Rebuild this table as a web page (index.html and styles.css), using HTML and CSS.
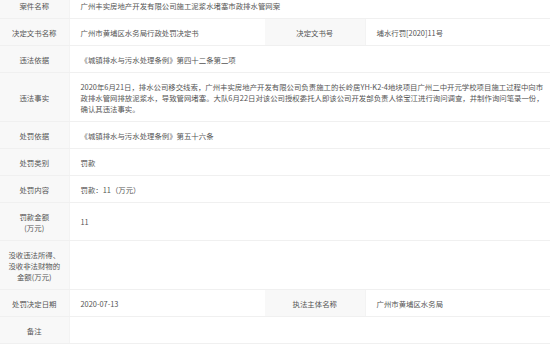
FILE: index.html
```html
<!DOCTYPE html>
<html lang="zh-CN">
<head>
<meta charset="utf-8">
<link rel="stylesheet" href="styles.css">
</head>
<body>
<table class="info">
  <colgroup>
    <col class="c-label">
    <col class="c-val1">
    <col class="c-label2">
    <col class="c-val2">
  </colgroup>
  <tr>
    <th>案件名称</th>
    <td colspan="3">广州丰实房地产开发有限公司施工泥浆水堵塞市政排水管网案</td>
  </tr>
  <tr>
    <th>决定文书名称</th>
    <td>广州市黄埔区水务局行政处罚决定书</td>
    <th>决定文书号</th>
    <td>埔水行罚[2020]11号</td>
  </tr>
  <tr>
    <th>违法依据</th>
    <td colspan="3">《城镇排水与污水处理条例》第四十二条第二项</td>
  </tr>
  <tr>
    <th>违法事实</th>
    <td colspan="3" class="fact">2020年6月21日，排水公司移交线索，广州丰实房地产开发有限公司负责施工的长岭居YH-K2-4地块项目广州二中开元学校项目施工过程中向市<br>政排水管网排放泥浆水，导致管网堵塞。大队6月22日对该公司授权委托人即该公司开发部负责人徐宝江进行询问调查，并制作询问笔录一份，<br>确认其违法事实。</td>
  </tr>
  <tr>
    <th>处罚依据</th>
    <td colspan="3">《城镇排水与污水处理条例》第五十六条</td>
  </tr>
  <tr>
    <th>处罚类别</th>
    <td colspan="3">罚款</td>
  </tr>
  <tr>
    <th>处罚内容</th>
    <td colspan="3">罚款：11（万元）</td>
  </tr>
  <tr>
    <th>罚款金额<br>(万元)</th>
    <td colspan="3">11</td>
  </tr>
  <tr>
    <th>没收违法所得、<br>没收非法财物的<br>金额(万元)</th>
    <td colspan="3"></td>
  </tr>
  <tr>
    <th>处罚决定日期</th>
    <td>2020-07-13</td>
    <th>执法主体名称</th>
    <td>广州市黄埔区水务局</td>
  </tr>
  <tr>
    <th>备注</th>
    <td colspan="3"></td>
  </tr>
</table>
</body>
</html>
```
FILE: styles.css
```css
html, body {
  margin: 0;
  padding: 0;
  background: #fff;
  overflow: hidden;
}
.info {
  width: 550px;
  margin-top: -8px;
  border-collapse: collapse;
  table-layout: fixed;
  font-family: "Noto Sans CJK SC", "Noto Sans", sans-serif;
  font-size: 7.4px;
  line-height: 11px;
  color: #555;
}
.c-label { width: 69px; }
.c-val1 { width: 196px; }
.c-label2 { width: 100px; }
.c-val2 { width: 185px; }
.info th, .info td {
  border-bottom: 1px solid #f0f0f0;
  padding: 7.5px 0 7.5px 11px;
  vertical-align: middle;
  text-align: left;
  font-weight: normal;
}
.info th {
  background: #f8f8f8;
  text-align: center;
  padding: 7.5px 2px;
  color: #555;
  border-right: 1px solid #f3f3f3;
}
.info td {
  color: #555;
}
.info td.fact {
  white-space: nowrap;
}
```
